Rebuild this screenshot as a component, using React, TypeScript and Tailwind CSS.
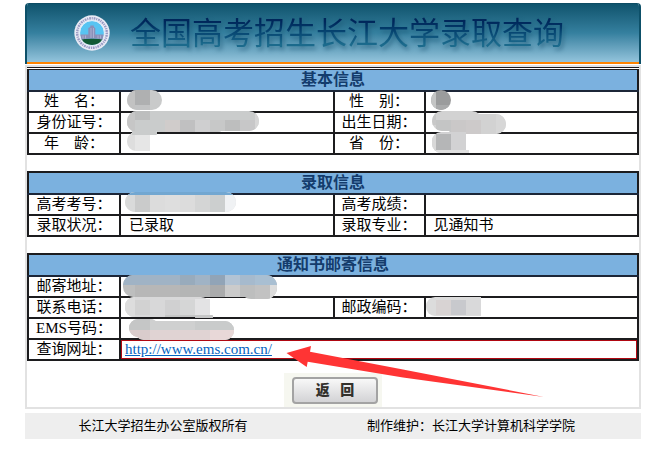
import type { ReactNode } from "react";

type Block = [x: number, y: number, w: number, h: number, fill: string];

interface MosaicProps {
  id: string;
  x: number;
  y: number;
  shapes: [x: number, y: number, w: number, h: number, r: number][];
  base: string;
  blocks?: Block[];
}

// Privacy mask: rounded brush strokes filled with coarse blocks.
function Mosaic({ id, x, y, shapes, base, blocks = [] }: MosaicProps) {
  return (
    <svg
      className="pointer-events-none absolute top-0 left-0 z-10 overflow-visible"
      width="10"
      height="10"
      viewBox={`${x} ${y} 10 10`}
      aria-hidden="true"
    >
      <clipPath id={id}>
        {shapes.map(([sx, sy, w, h, r], i) => (
          <rect key={i} x={sx} y={sy} width={w} height={h} rx={r} />
        ))}
      </clipPath>
      <g clipPath={`url(#${id})`} shapeRendering="crispEdges">
        <rect x={x - 10} y={y - 10} width="300" height="60" fill={base} />
        {blocks.map(([bx, by, w, h, fill], i) => (
          <rect key={i} x={bx} y={by} width={w} height={h} fill={fill} />
        ))}
      </g>
    </svg>
  );
}

function Logo() {
  return (
    <svg width="36" height="36" viewBox="0 0 36 36" aria-hidden="true">
      <circle cx="18" cy="18" r="17.7" fill="#e9ebf5" />
      <circle
        cx="18"
        cy="18"
        r="14.8"
        fill="none"
        stroke="#9a9bc4"
        strokeWidth="2.4"
        strokeDasharray="1.1 0.9 1.8 0.8"
      />
      <circle cx="18" cy="18" r="12.4" fill="#58c4f2" stroke="#eef1f9" strokeWidth="1" />
      <path d="M7.500 24.300 Q18 22.500 28.500 24.300 Q25 30 18 30 Q11 30 7.500 24.300Z" fill="#125a34" />
      <path d="M6.300 19.500h8v-6.500l2-1v-1.500h3.500v1.500l1.500 1v6.500h8.400l-1.200 5q-10.500-1.900-21 0z" fill="#8a90b8" />
      <path d="M17 13v10M19.500 13v10M9 20.500v3M11.500 20.500v3M24 20.500v3M26.500 20.500v3" stroke="#b3b8d6" strokeWidth="0.8" />
    </svg>
  );
}

function Label({ children }: { children: ReactNode }) {
  return (
    <th scope="row" className="border-2 border-[#1c1c1e] p-0 text-center font-normal whitespace-nowrap">
      {children}
    </th>
  );
}

function Value({ children, span }: { children?: ReactNode; span?: number }) {
  return (
    <td colSpan={span} className="relative border-2 border-[#1c1c1e] p-0 pl-2 text-left">
      {children}
    </td>
  );
}

function Section({ title, double, children }: { title: string; double?: boolean; children: ReactNode }) {
  return (
    <table
      className={`w-full table-fixed border-collapse border-2 border-[#1c1c1e] text-[15px] leading-[19px] ${
        double ? "border-t-3 border-t-[#1c1c1e] [border-top-style:double]" : ""
      }`}
    >
      <colgroup>
        <col className="w-[92px]" />
        <col />
        <col className="w-[91px]" />
        <col />
      </colgroup>
      <thead>
        <tr>
          <th
            colSpan={4}
            scope="colgroup"
            className="border-b-2 border-[#1c2638] bg-[#7bb1df] p-0 text-center text-base leading-5 font-bold text-[#143c6c]"
          >
            {title}
          </th>
        </tr>
      </thead>
      <tbody>{children}</tbody>
    </table>
  );
}

function Arrow() {
  return (
    <svg
      className="pointer-events-none absolute top-0 left-0 z-20 overflow-visible"
      width="10"
      height="10"
      viewBox="121 340 10 10"
      aria-hidden="true"
    >
      <path d="M286.500 353 L311 346 L310 351.700 L403 369.500 L544 397 L403 377.500 L307.700 361.700 L306.700 367Z" fill="#ff3434" />
    </svg>
  );
}

export default function App() {
  return (
    <div className="bg-white pt-[3px] pr-[27px] pb-3 pl-[25px] font-['Liberation_Serif','Noto_Sans_CJK_SC',sans-serif] text-black">
      <header className="overflow-hidden rounded-t-sm border-x-2 border-[#0d5069]">
        <div className="flex h-[59px] items-center gap-5 border-t border-[#0d4c64] bg-linear-to-b from-[#0f546d] via-[#35809f] to-[#93c4dc] pl-[47px]">
          <Logo />
          <h1 className="pb-1 font-['Noto_Sans_CJK_SC',sans-serif] text-[31px] leading-[36px] font-normal whitespace-nowrap">
            <span className="bg-linear-to-b from-[#00265a] from-30% to-[#1b6a8c] to-80% bg-clip-text text-transparent drop-shadow-[2px_3px_2px_#174e6c99]">
              全国高考招生长江大学录取查询
            </span>
          </h1>
        </div>
        <div className="h-0.5 bg-[#ff8400]" />
      </header>

      <main className="mt-px flex flex-col gap-4 border-2 border-[#e2e2e2]">
        <Section title="基本信息" double>
          <tr>
            <Label>姓　名：</Label>
            <Value>
              <Mosaic
                id="m-name"
                x={121}
                y={92}
                shapes={[[127, 90, 35, 20, 10]]}
                base="#c9caca"
                blocks={[[120, 88, 15, 24, "#c2c2c2"], [135, 88, 15, 17, "#afb0b1"], [135, 105, 15, 6, "#c2c3c4"]]}
              />
            </Value>
            <Label>性　别：</Label>
            <Value>
              <Mosaic
                id="m-sex"
                x={425}
                y={92}
                shapes={[[430, 90, 20, 20, 10]]}
                base="#9b9c9d"
                blocks={[[425, 88, 10, 24, "#c4c5c5"], [435, 105, 15, 6, "#a9aaab"]]}
              />
            </Value>
          </tr>
          <tr>
            <Label>身份证号：</Label>
            <Value>
              <Mosaic
                id="m-id"
                x={121}
                y={113}
                shapes={[[127, 111, 100, 21, 10], [150, 111, 109, 20, 10], [132, 122, 24, 13, 3]]}
                base="#cacccc"
                blocks={[
                  [127, 110, 8, 25, "#c6c6c6"],
                  [135, 110, 15, 10, "#bdbebe"],
                  [165, 120, 15, 15, "#d0cccb"],
                  [180, 120, 15, 15, "#c0c0c1"],
                  [195, 120, 15, 15, "#cfcfd0"],
                  [210, 120, 15, 15, "#c7c8c8"],
                  [225, 120, 15, 15, "#bdbebe"],
                  [240, 120, 15, 15, "#c7c7c8"],
                  [255, 110, 5, 25, "#d6d6d6"],
                ]}
              />
            </Value>
            <Label>出生日期：</Label>
            <Value>
              <Mosaic
                id="m-birth"
                x={425}
                y={113}
                shapes={[[431, 111, 50, 20, 10], [445, 114, 60, 20, 10]]}
                base="#d2d2d2"
                blocks={[
                  [430, 110, 5, 15, "#c8c8c8"],
                  [435, 120, 15, 15, "#c4c5c5"],
                  [450, 120, 15, 15, "#cac8c8"],
                  [465, 120, 15, 15, "#cdcaca"],
                  [495, 114, 10, 20, "#d7d7d7"],
                ]}
              />
            </Value>
          </tr>
          <tr>
            <Label>年　龄：</Label>
            <Value>
              <Mosaic
                id="m-age"
                x={121}
                y={134}
                shapes={[[127, 132, 23, 19, 9], [138, 132, 12, 19, 0], [132, 131, 25, 4, 1]]}
                base="#ffffff"
                blocks={[
                  [127, 130, 8, 22, "#dedede"],
                  [135, 130, 15, 22, "#e6e6e6"],
                  [132, 130, 25, 5, "#cacccc"],
                ]}
              />
            </Value>
            <Label>省　份：</Label>
            <Value>
              <Mosaic
                id="m-prov"
                x={425}
                y={134}
                shapes={[[431, 132, 34, 21, 9], [440, 132, 25, 20, 0], [440, 150, 28, 3, 1]]}
                base="#d2d2d3"
                blocks={[[430, 130, 5, 24, "#d8d8d8"], [435, 134, 15, 16, "#b5b6b7"], [435, 150, 33, 4, "#e0e0e0"]]}
              />
            </Value>
          </tr>
        </Section>

        <Section title="录取信息">
          <tr>
            <Label>高考考号：</Label>
            <Value>
              <Mosaic
                id="m-exam"
                x={121}
                y={195}
                shapes={[[125, 192, 111, 20, 10]]}
                base="#dcdcdc"
                blocks={[
                  [120, 192, 15, 21, "#d9dada"],
                  [135, 192, 15, 21, "#cacbcb"],
                  [165, 192, 15, 21, "#dedede"],
                  [195, 192, 15, 21, "#d4d5d5"],
                  [210, 192, 15, 21, "#cccfcf"],
                  [225, 192, 15, 21, "#f0f2f4"],
                  [120, 191, 120, 4, "#72a7d1"],
                ]}
              />
            </Value>
            <Label>高考成绩：</Label>
            <Value />
          </tr>
          <tr>
            <Label>录取状况：</Label>
            <Value>已录取</Value>
            <Label>录取专业：</Label>
            <Value>见通知书</Value>
          </tr>
        </Section>

        <Section title="通知书邮寄信息">
          <tr>
            <Label>邮寄地址：</Label>
            <Value span={3}>
              <Mosaic
                id="m-addr"
                x={121}
                y={277}
                shapes={[[123, 275, 140, 22, 10], [240, 275, 37, 24, 11]]}
                base="#bdbebe"
                blocks={[
                  [120, 274, 105, 11, "#a0b3c5"],
                  [180, 274, 15, 11, "#98abbc"],
                  [210, 274, 15, 11, "#91a4b7"],
                  [225, 274, 15, 11, "#b2c3d4"],
                  [240, 274, 15, 11, "#a6bacd"],
                  [255, 274, 25, 11, "#a9bfd2"],
                  [135, 285, 45, 15, "#b7b7b7"],
                  [180, 285, 30, 15, "#b4b5b5"],
                  [210, 285, 15, 15, "#aaabac"],
                  [225, 285, 15, 15, "#cbcbcb"],
                  [255, 285, 15, 15, "#c2c2c2"],
                  [270, 285, 10, 15, "#dcdcdc"],
                ]}
              />
            </Value>
          </tr>
          <tr>
            <Label>联系电话：</Label>
            <Value>
              <Mosaic
                id="m-tel"
                x={121}
                y={298}
                shapes={[[125, 297, 85, 20, 9], [180, 299, 30, 18, 0], [195, 315, 18, 3, 1]]}
                base="#d8d8d9"
                blocks={[
                  [120, 296, 15, 24, "#dddddd"],
                  [135, 300, 15, 15, "#d2d2d2"],
                  [165, 300, 15, 15, "#d0d0d1"],
                  [180, 300, 15, 15, "#d5d6d6"],
                  [195, 299, 15, 16, "#e3e3e4"],
                  [165, 315, 50, 4, "#c5c6c6"],
                ]}
              />
            </Value>
            <Label>邮政编码：</Label>
            <Value>
              <Mosaic
                id="m-zip"
                x={425}
                y={298}
                shapes={[[425, 297, 50, 19, 9], [437, 297, 43, 19, 0]]}
                base="#dcdcdc"
                blocks={[[435, 300, 15, 15, "#d8d3d3"], [450, 300, 15, 15, "#c8c9cd"], [465, 300, 15, 15, "#d9d9da"]]}
              />
            </Value>
          </tr>
          <tr>
            <Label>EMS号码：</Label>
            <Value span={3}>
              <Mosaic
                id="m-ems"
                x={121}
                y={319}
                shapes={[[129, 319, 30, 18, 9], [135, 321, 99, 19, 9]]}
                base="#d0cfcf"
                blocks={[
                  [120, 318, 30, 12, "#c5c6c6"],
                  [150, 318, 45, 12, "#cfd0d0"],
                  [195, 318, 40, 12, "#c9cbcb"],
                  [120, 330, 30, 12, "#d9cccc"],
                  [150, 330, 60, 12, "#e0d3d3"],
                  [210, 330, 30, 12, "#e8d8d8"],
                ]}
              />
            </Value>
          </tr>
          <tr>
            <Label>查询网址：</Label>
            <td
              colSpan={3}
              className="relative border-2 border-[#1c1c1e] p-0 pl-1 text-left shadow-[inset_0_0_0_1px_#b00812]"
            >
              <a href="http://www.ems.com.cn/" className="text-[#0563c1] underline">
                http://www.ems.com.cn/
              </a>
              <Arrow />
            </td>
          </tr>
        </Section>

        <div className="-mt-1 self-center bg-[#f6f7f0] pt-1 pr-1 pb-[3px] pl-2">
          <button
            type="button"
            className="block h-[27px] w-[86px] rounded-sm border-2 border-[#a3a3a3] bg-linear-to-b from-[#f8f8f8] to-[#d3d3d5] text-sm leading-5 font-black text-[#33312c]"
          >
            返&nbsp;&nbsp;&nbsp;回
          </button>
        </div>
      </main>

      <footer className="mt-1 grid h-[26px] grid-cols-2 items-center bg-[#eeeeee] text-center text-[13px] leading-4">
        <span className="pr-8">长江大学招生办公室版权所有</span>
        <span className="pr-8">制作维护：长江大学计算机科学学院</span>
      </footer>
    </div>
  );
}
